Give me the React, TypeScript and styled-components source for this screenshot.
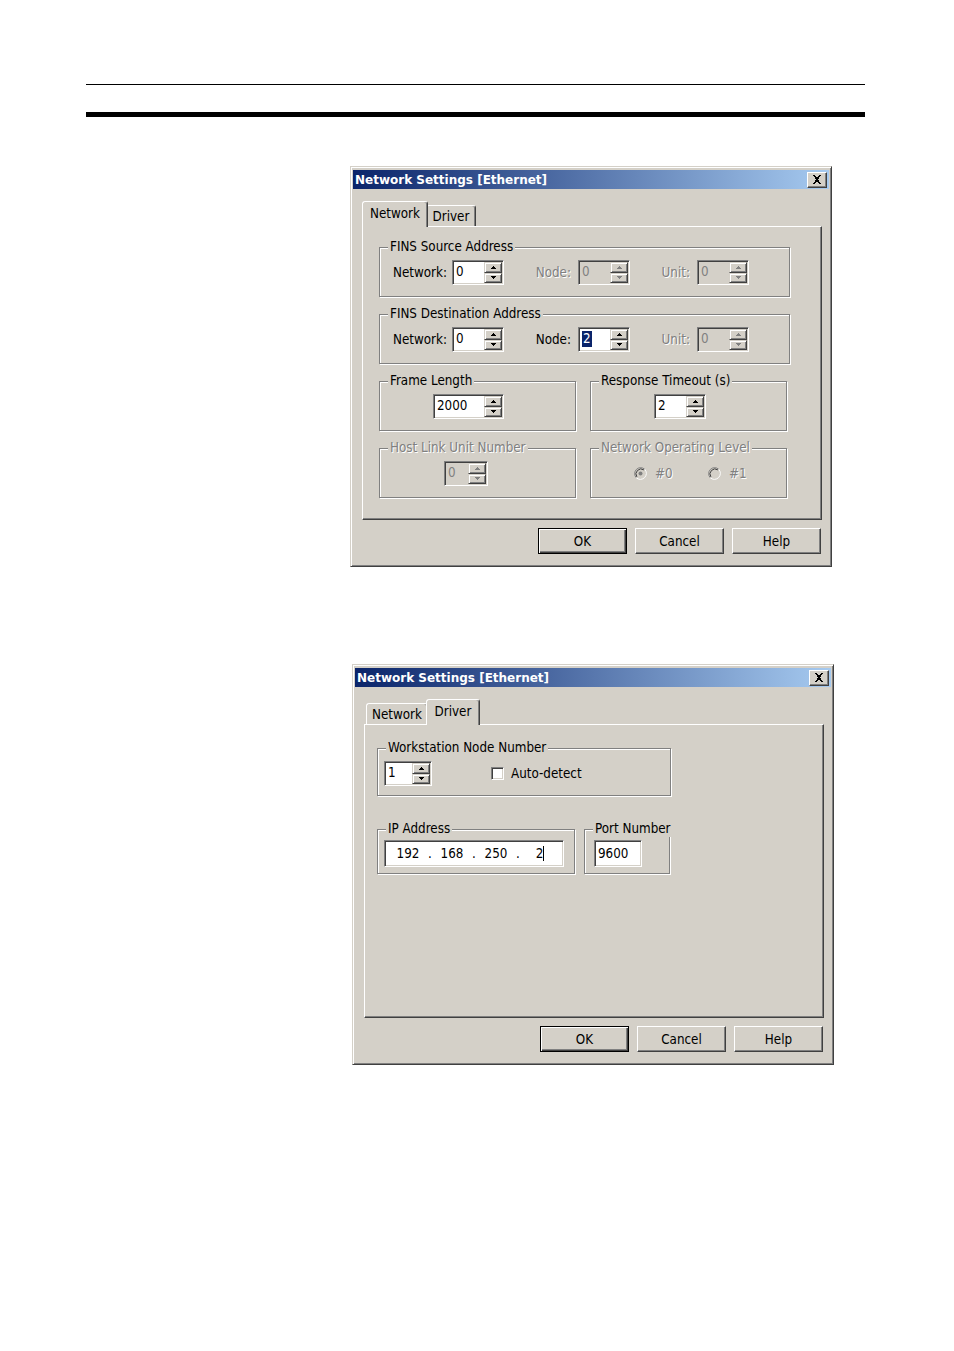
import React from "react";
import styled, { createGlobalStyle, css } from "styled-components";

const FACE = "#d4d0c8";
const SHADOW = "#808080";
const DARK = "#404040";
const HILITE = "#ffffff";
const UI_FONT = `"DejaVu Sans Condensed", "Liberation Sans", sans-serif`;
const FS = "13.3px";

const GlobalStyle = createGlobalStyle`
  html, body { margin: 0; padding: 0; background: #fff; }
  body { font-family: ${UI_FONT}; color: #000; }
  * { box-sizing: border-box; }
`;

const Page = styled.div`
  width: 954px;
  min-height: 1351px;
  padding-top: 84px;
  display: flex;
  flex-direction: column;
`;

const RuleThin = styled.div`
  margin-left: 86px;
  width: 779px;
  height: 1px;
  background: #000;
`;

const RuleThick = styled.div`
  margin-left: 86px;
  margin-top: 27px;
  width: 779px;
  height: 5px;
  background: #000;
`;

const Dialog = styled.div<{ $ml: number; $mt: number }>`
  margin: ${(p) => p.$mt}px 0 0 ${(p) => p.$ml}px;
  width: 482px;
  background: ${FACE};
  border: 1px solid;
  border-color: ${FACE} ${DARK} ${DARK} ${FACE};
  box-shadow: inset 1px 1px ${HILITE}, inset -1px -1px ${SHADOW};
  padding: 3px 2px 12px 2px;
  display: flex;
  flex-direction: column;
`;

const TitleBar = styled.div`
  height: 19px;
  display: flex;
  align-items: center;
  justify-content: space-between;
  padding: 0 2px 0 2px;
  background: linear-gradient(to right, #0a246a, #a6caf0);
`;

const TitleText = styled.span`
  font-family: "DejaVu Sans", sans-serif;
  font-weight: bold;
  font-size: 12px;
  color: #fff;
  white-space: nowrap;
`;

const Raised = css`
  background: ${FACE};
  border: 1px solid;
  border-color: ${HILITE} ${DARK} ${DARK} ${HILITE};
  box-shadow: inset -1px -1px ${SHADOW};
`;

const CloseButton = styled.div`
  ${Raised};
  width: 20px;
  height: 16px;
  display: flex;
  align-items: center;
  justify-content: center;
`;

const TabRow = styled.div`
  display: flex;
  align-items: flex-end;
  height: 25px;
  margin: 12px 0 0 9px;
  padding-left: 2px;
`;

const Tab = styled.div<{ $active?: boolean; $w: number }>`
  position: relative;
  z-index: ${(p) => (p.$active ? 2 : 1)};
  width: ${(p) => p.$w + (p.$active ? 4 : 0)}px;
  height: ${(p) => (p.$active ? 26 : 21)}px;
  margin: 0 ${(p) => (p.$active ? -2 : 0)}px ${(p) => (p.$active ? -1 : 0)}px;
  background: ${FACE};
  border: 1px solid;
  border-bottom: none;
  border-color: ${HILITE} ${DARK} transparent ${HILITE};
  border-radius: 3px 3px 0 0;
  box-shadow: inset -1px 0 ${SHADOW};
  display: flex;
  align-items: center;
  justify-content: center;
  padding-bottom: ${(p) => (p.$active ? 2 : 0)}px;
  font-size: ${FS};
  white-space: nowrap;
`;

const Panel = styled.div<{ $pad: string }>`
  height: 294px;
  margin: 0 7px 0 9px;
  border: 1px solid;
  border-color: ${HILITE} ${DARK} ${DARK} ${HILITE};
  box-shadow: inset -1px -1px ${SHADOW};
  padding: ${(p) => p.$pad};
  display: flex;
  flex-direction: column;
`;

const Stack = styled.div<{ $gap: number }>`
  display: flex;
  flex-direction: column;
  gap: ${(p) => p.$gap}px;
`;

const GroupRow = styled.div<{ $gap: number; $mt?: number }>`
  display: flex;
  gap: ${(p) => p.$gap}px;
  margin-top: ${(p) => p.$mt ?? 0}px;
`;

const Group = styled.fieldset<{ $w: number; $pad: string }>`
  width: ${(p) => p.$w}px;
  min-width: 0;
  margin: 0;
  padding: ${(p) => p.$pad};
  border: 1px solid ${SHADOW};
  box-shadow: inset 1px 1px ${HILITE}, 1px 1px ${HILITE};
`;

const disabledText = css`
  color: ${SHADOW};
  text-shadow: 1px 1px 0 ${HILITE};
`;

const Legend = styled.legend<{ $disabled?: boolean }>`
  margin-left: 8px;
  padding: 0 2px;
  background: ${FACE};
  font-size: ${FS};
  line-height: 16px;
  white-space: nowrap;
  ${(p) => p.$disabled && disabledText};
`;

const FieldRow = styled.div<{ $ml: number }>`
  display: flex;
  align-items: center;
  height: 25px;
  margin-left: ${(p) => p.$ml}px;
`;

const FieldLabel = styled.span<{ $w: number; $disabled?: boolean }>`
  width: ${(p) => p.$w}px;
  margin-right: 7px;
  text-align: right;
  font-size: ${FS};
  white-space: nowrap;
  ${(p) => p.$disabled && disabledText};
`;

const Sunken = styled.div<{ $w: number; $h?: number; $disabled?: boolean }>`
  width: ${(p) => p.$w}px;
  height: ${(p) => p.$h ?? 25}px;
  flex: none;
  border: 1px solid;
  border-color: ${SHADOW} ${HILITE} ${HILITE} ${SHADOW};
  box-shadow: inset 1px 1px ${DARK}, inset -1px -1px ${FACE};
  padding: 1px;
  background: ${(p) => (p.$disabled ? FACE : "#fff")};
  display: flex;
`;

const FieldText = styled.div<{ $disabled?: boolean; $center?: boolean }>`
  flex: 1;
  min-width: 0;
  font-size: ${FS};
  line-height: 16px;
  padding: ${(p) => (p.$center ? "0 0 0 2px" : "2px 0 0 2px")};
  display: flex;
  align-items: ${(p) => (p.$center ? "center" : "flex-start")};
  white-space: nowrap;
  color: ${(p) => (p.$disabled ? SHADOW : "#000")};
`;

const Selection = styled.span`
  background: #0a246a;
  color: #fff;
  padding: 0 1px;
`;

const SpinButtons = styled.div`
  width: 18px;
  display: flex;
  flex-direction: column;
`;

const SpinButton = styled.div`
  flex: 1;
  display: flex;
  align-items: center;
  justify-content: center;
  background: ${FACE};
  border: 1px solid;
  border-color: ${FACE} ${DARK} ${DARK} ${FACE};
  box-shadow: inset 1px 1px ${HILITE}, inset -1px -1px ${SHADOW};
`;

const ButtonRow = styled.div`
  display: flex;
  justify-content: flex-end;
  gap: 8px;
  margin-top: 8px;
  padding-right: 8px;
`;

const Button = styled.button<{ $default?: boolean }>`
  width: 89px;
  height: 26px;
  padding: 0;
  font-family: ${UI_FONT};
  font-size: ${FS};
  color: #000;
  ${Raised};
  ${(p) =>
    p.$default &&
    css`
      border-color: #000;
      box-shadow: inset 1px 1px ${HILITE}, inset -1px -1px ${DARK}, inset -2px -2px ${SHADOW};
    `};
`;

const RadioRow = styled.div<{ $ml: number }>`
  display: flex;
  align-items: center;
  height: 25px;
  margin-left: ${(p) => p.$ml}px;
`;

const RadioItem = styled.div<{ $w: number }>`
  width: ${(p) => p.$w}px;
  display: flex;
  align-items: center;
  gap: 8px;
  font-size: ${FS};
  ${disabledText};
`;

const CheckBox = styled.div<{ $ml: number }>`
  width: 13px;
  height: 13px;
  margin-left: ${(p) => p.$ml}px;
  border: 1px solid;
  border-color: ${SHADOW} ${HILITE} ${HILITE} ${SHADOW};
  box-shadow: inset 1px 1px ${DARK}, inset -1px -1px ${FACE};
  background: #fff;
`;

const CheckLabel = styled.span`
  margin-left: 7px;
  font-size: ${FS};
  white-space: nowrap;
`;

const IpText = styled.div`
  flex: 1;
  display: flex;
  align-items: center;
  font-size: ${FS};
`;

const IpOctet = styled.span`
  flex: 1;
  display: flex;
  justify-content: center;
  align-items: center;
`;

const IpDot = styled.span`
  width: 0;
  display: flex;
  justify-content: center;
`;

const Caret = styled.span`
  display: inline-block;
  width: 1px;
  height: 15px;
  background: #000;
`;

function Arrow({ dir, disabled }: { dir: "up" | "down"; disabled?: boolean }) {
  return (
    <svg width="5" height="3" viewBox="0 0 5 3" shapeRendering="crispEdges" fill={disabled ? SHADOW : "#000"}>
      {dir === "up" ? <path d="M2 0h1v1H2zM1 1h3v1H1zM0 2h5v1H0z" /> : <path d="M0 0h5v1H0zM1 1h3v1H1zM2 2h1v1H2z" />}
    </svg>
  );
}

function CloseIcon() {
  return (
    <svg width="10" height="9" viewBox="0 0 10 9" shapeRendering="crispEdges">
      <path d="M1 0h2l2 3 2-3h2L6 4.5 9 9H7L5 6 3 9H1l3-4.5z" fill="#000" />
    </svg>
  );
}

function RadioIcon({ checked }: { checked?: boolean }) {
  return (
    <svg width="13" height="13" viewBox="0 0 13 13">
      <circle cx="6.5" cy="6.5" r="5.5" fill={FACE} />
      <path d="M2.26 10.74 A6 6 0 0 1 10.74 2.26" stroke={SHADOW} fill="none" />
      <path d="M10.74 2.26 A6 6 0 0 1 2.26 10.74" stroke={HILITE} fill="none" />
      <path d="M3 10 A5 5 0 0 1 10 3" stroke={DARK} fill="none" />
      <path d="M10 3 A5 5 0 0 1 3 10" stroke={FACE} fill="none" />
      {checked && <circle cx="6.5" cy="6.5" r="2" fill={SHADOW} />}
    </svg>
  );
}

function SpinBox({ w, value, disabled, selected }: { w: number; value: string; disabled?: boolean; selected?: boolean }) {
  return (
    <Sunken $w={w} $disabled={disabled}>
      <FieldText $disabled={disabled}>{selected ? <Selection>{value}</Selection> : value}</FieldText>
      <SpinButtons>
        <SpinButton>
          <Arrow dir="up" disabled={disabled} />
        </SpinButton>
        <SpinButton>
          <Arrow dir="down" disabled={disabled} />
        </SpinButton>
      </SpinButtons>
    </Sunken>
  );
}

function Window({ ml, mt, active, children }: { ml: number; mt: number; active: "Network" | "Driver"; children: React.ReactNode }) {
  return (
    <Dialog $ml={ml} $mt={mt}>
      <TitleBar>
        <TitleText>Network Settings [Ethernet]</TitleText>
        <CloseButton>
          <CloseIcon />
        </CloseButton>
      </TitleBar>
      <TabRow>
        <Tab $w={62} $active={active === "Network"}>Network</Tab>
        <Tab $w={50} $active={active === "Driver"}>Driver</Tab>
      </TabRow>
      {children}
      <ButtonRow>
        <Button $default>OK</Button>
        <Button>Cancel</Button>
        <Button>Help</Button>
      </ButtonRow>
    </Dialog>
  );
}

function AddressGroup({ title, nodeValue, nodeEnabled }: { title: string; nodeValue: string; nodeEnabled?: boolean }) {
  return (
    <Group $w={411} $pad="5px 0 11px 0">
      <Legend>{title}</Legend>
      <FieldRow $ml={13}>
        <FieldLabel $w={52}>Network:</FieldLabel>
        <SpinBox w={52} value="0" />
        <FieldLabel $w={67} $disabled={!nodeEnabled}>Node:</FieldLabel>
        <SpinBox w={52} value={nodeValue} disabled={!nodeEnabled} selected={nodeEnabled} />
        <FieldLabel $w={60} $disabled>Unit:</FieldLabel>
        <SpinBox w={52} value="0" disabled />
      </FieldRow>
    </Group>
  );
}

export default function App() {
  return (
    <>
      <GlobalStyle />
      <Page>
        <RuleThin />
        <RuleThick />

        <Window ml={350} mt={49} active="Network">
          <Panel $pad="12px 0 0 16px">
            <Stack $gap={9}>
              <AddressGroup title="FINS Source Address" nodeValue="0" />
              <AddressGroup title="FINS Destination Address" nodeValue="2" nodeEnabled />
              <GroupRow $gap={14}>
                <Group $w={197} $pad="5px 0 11px 0">
                  <Legend>Frame Length</Legend>
                  <FieldRow $ml={53}>
                    <SpinBox w={71} value="2000" />
                  </FieldRow>
                </Group>
                <Group $w={197} $pad="5px 0 11px 0">
                  <Legend>Response Timeout (s)</Legend>
                  <FieldRow $ml={63}>
                    <SpinBox w={52} value="2" />
                  </FieldRow>
                </Group>
              </GroupRow>
              <GroupRow $gap={14}>
                <Group $w={197} $pad="5px 0 11px 0">
                  <Legend $disabled>Host Link Unit Number</Legend>
                  <FieldRow $ml={64}>
                    <SpinBox w={44} value="0" disabled />
                  </FieldRow>
                </Group>
                <Group $w={197} $pad="5px 0 11px 0">
                  <Legend $disabled>Network Operating Level</Legend>
                  <RadioRow $ml={43}>
                    <RadioItem $w={74}>
                      <RadioIcon checked />
                      #0
                    </RadioItem>
                    <RadioItem $w={60}>
                      <RadioIcon />
                      #1
                    </RadioItem>
                  </RadioRow>
                </Group>
              </GroupRow>
            </Stack>
          </Panel>
        </Window>

        <Window ml={352} mt={97} active="Driver">
          <Panel $pad="15px 0 0 12px">
            <Group $w={294} $pad="5px 0 9px 0">
              <Legend>Workstation Node Number</Legend>
              <FieldRow $ml={6}>
                <SpinBox w={48} value="1" />
                <CheckBox $ml={59} />
                <CheckLabel>Auto-detect</CheckLabel>
              </FieldRow>
            </Group>
            <GroupRow $gap={9} $mt={25}>
              <Group $w={198} $pad="4px 0 7px 0">
                <Legend>IP Address</Legend>
                <FieldRow $ml={6}>
                  <Sunken $w={180} $h={27}>
                    <IpText>
                      <IpOctet>192</IpOctet>
                      <IpDot>.</IpDot>
                      <IpOctet>168</IpOctet>
                      <IpDot>.</IpDot>
                      <IpOctet>250</IpOctet>
                      <IpDot>.</IpDot>
                      <IpOctet>
                        2<Caret />
                      </IpOctet>
                    </IpText>
                  </Sunken>
                </FieldRow>
              </Group>
              <Group $w={86} $pad="4px 0 7px 0">
                <Legend>Port Number</Legend>
                <FieldRow $ml={9}>
                  <Sunken $w={48} $h={27}>
                    <FieldText $center>9600</FieldText>
                  </Sunken>
                </FieldRow>
              </Group>
            </GroupRow>
          </Panel>
        </Window>
      </Page>
    </>
  );
}
